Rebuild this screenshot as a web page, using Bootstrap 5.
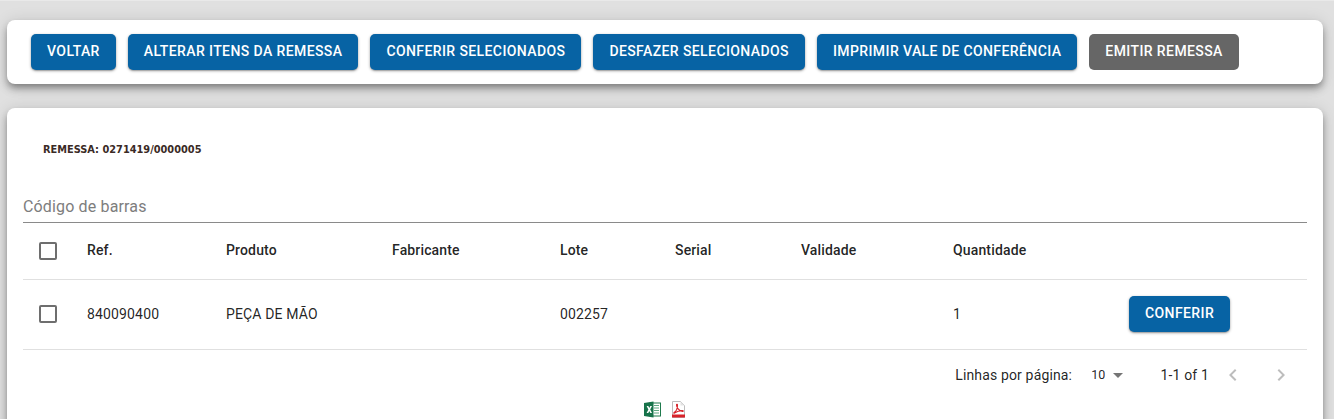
<!DOCTYPE html>
<html lang="pt-BR">
<head>
    <meta charset="UTF-8">
    <meta name="viewport" content="width=device-width, initial-scale=1">
    <title>Conferência de Remessa</title>
    <link href="https://cdn.jsdelivr.net/npm/bootstrap@5.3.0/dist/css/bootstrap.min.css" rel="stylesheet">
    <style>
        html, body { height: 100%; overflow: hidden; }
        body {
            background: #e0e0e0;
            font-family: Roboto, sans-serif;
            font-size: 14px;
            color: rgba(0, 0, 0, .87);
        }
        .pagina { padding: 19px 11px 0 7px; border-top: 1px solid #e9e9e9; }
        .painel {
            border: 0;
            border-radius: 8px;
            box-shadow: 0 4px 6px -1px rgba(0,0,0,.3), 0 6px 10px 0 rgba(0,0,0,.14), 0 1px 16px 0 rgba(0,0,0,.12);
        }
        .painel-acoes { margin-bottom: 24px; padding: 14px 24px; gap: 12px; }
        .painel-dados { padding: 0 16px; height: 400px; }
        .btn-acao {
            --bs-btn-color: #fff;
            --bs-btn-bg: #0763a4;
            --bs-btn-border-color: #0763a4;
            --bs-btn-hover-color: #fff;
            --bs-btn-hover-bg: #06568f;
            --bs-btn-hover-border-color: #06568f;
            border: 0;
            border-radius: 5px;
            padding: 5px 16px 7px;
            height: 36px;
            font-size: 14px;
            font-weight: 500;
            line-height: 24px;
            letter-spacing: .4px;
            text-transform: uppercase;
            white-space: nowrap;
            box-shadow: 0 1px 3px rgba(0,0,0,.35), 0 1px 1px rgba(0,0,0,.14);
        }
        .btn-acao-cinza {
            --bs-btn-bg: #666;
            --bs-btn-border-color: #666;
            --bs-btn-hover-bg: #666;
            --bs-btn-hover-border-color: #666;
            box-shadow: none;
        }
        .remessa-titulo {
            margin: 0;
            padding: 36px 0 0 20px;
            height: 76px;
            font-family: "DejaVu Sans", sans-serif;
            font-size: 9.8px;
            font-weight: 700;
            line-height: 12px;
            color: #3a2a25;
        }
        .campo-barras {
            display: block;
            width: 100%;
            height: 39px;
            padding: 6px 0 0;
            border: 0;
            border-bottom: 1px solid #8a8a8a;
            border-radius: 0;
            background: transparent;
            font-size: 16px;
            letter-spacing: .15px;
            outline: 0;
        }
        .campo-barras::placeholder { color: #7d7d7d; opacity: 1; }
        .tabela-itens { table-layout: fixed; width: 100%; margin: 0; }
        .tabela-itens th, .tabela-itens td {
            padding: 0 16px;
            border-bottom: 1px solid #e0e0e0;
            vertical-align: middle;
            color: rgba(0, 0, 0, .87);
            font-size: 14px;
            letter-spacing: .15px;
        }
        .tabela-itens th { height: 56px; font-weight: 500; }
        .tabela-itens td { height: 70px; font-weight: 400; }
        .tabela-itens .cel-check { padding: 0 0 0 16px; }
        .tabela-itens .btn-acao { letter-spacing: .4px; }
        .c1 { width: 48px; } .c2 { width: 139px; } .c3 { width: 166px; }
        .c4 { width: 168px; } .c5 { width: 115px; } .c6 { width: 126px; }
        .c7 { width: 152px; } .c8 { width: 176px; }
        .caixa {
            display: block;
            width: 18px;
            height: 18px;
            margin: 0;
            border: 2px solid #6e6e6e;
            border-radius: 2px;
            background: #fff;
            appearance: none;
        }
        .rodape-tabela { height: 51px; padding-right: 14px; letter-spacing: .15px; }
        .rodape-rotulo { margin-right: 19px; }
        .rodape-linhas { font-size: 12.5px; margin-right: 7px; }
        .seta-baixo {
            width: 0; height: 0;
            border-left: 5.5px solid transparent;
            border-right: 5.5px solid transparent;
            border-top: 5px solid #757575;
            margin-right: 38px;
        }
        .rodape-contagem { margin-right: 12px; }
        .seta-pag { width: 24px; height: 24px; display: block; }
        .seta-pag + .seta-pag { margin-left: 24px; }
        .icones-exportar { gap: 10px; height: 17px; }
    </style>
</head>
<body>
    <div class="pagina">
        <!-- Barra de ações -->
        <div class="card painel painel-acoes d-flex flex-row">
            <button type="button" class="btn btn-acao">Voltar</button>
            <button type="button" class="btn btn-acao">Alterar itens da remessa</button>
            <button type="button" class="btn btn-acao">Conferir selecionados</button>
            <button type="button" class="btn btn-acao">Desfazer selecionados</button>
            <button type="button" class="btn btn-acao">Imprimir vale de conferência</button>
            <button type="button" class="btn btn-acao btn-acao-cinza">Emitir remessa</button>
        </div>

        <!-- Dados da remessa -->
        <div class="card painel painel-dados">
            <p class="remessa-titulo">REMESSA: 0271419/0000005</p>
            <input type="text" class="campo-barras" placeholder="Código de barras">

            <table class="table tabela-itens">
                <colgroup>
                    <col class="c1"><col class="c2"><col class="c3"><col class="c4">
                    <col class="c5"><col class="c6"><col class="c7"><col class="c8"><col>
                </colgroup>
                <thead>
                    <tr>
                        <th class="cel-check"><input type="checkbox" class="caixa" aria-label="Selecionar todos"></th>
                        <th>Ref.</th>
                        <th>Produto</th>
                        <th>Fabricante</th>
                        <th>Lote</th>
                        <th>Serial</th>
                        <th>Validade</th>
                        <th>Quantidade</th>
                        <th></th>
                    </tr>
                </thead>
                <tbody>
                    <tr>
                        <td class="cel-check"><input type="checkbox" class="caixa" aria-label="Selecionar"></td>
                        <td>840090400</td>
                        <td>PEÇA DE MÃO</td>
                        <td></td>
                        <td>002257</td>
                        <td></td>
                        <td></td>
                        <td>1</td>
                        <td><button type="button" class="btn btn-acao">Conferir</button></td>
                    </tr>
                </tbody>
            </table>

            <!-- Paginação -->
            <div class="rodape-tabela d-flex align-items-center justify-content-end">
                <span class="rodape-rotulo">Linhas por página:</span>
                <span class="rodape-linhas">10</span>
                <span class="seta-baixo"></span>
                <span class="rodape-contagem">1-1 of 1</span>
                <svg class="seta-pag" viewBox="0 0 24 24"><path fill="#bdbdbd" d="M15.41 7.41 14 6l-6 6 6 6 1.41-1.41L10.83 12z"/></svg>
                <svg class="seta-pag" viewBox="0 0 24 24"><path fill="#bdbdbd" d="M8.59 16.59 10 18l6-6-6-6-1.41 1.41L13.17 12z"/></svg>
            </div>

            <!-- Exportar -->
            <div class="icones-exportar d-flex justify-content-center">
                <svg width="17" height="17" viewBox="0 0 17 17">
                    <rect x="6" y="2" width="10.500" height="13" fill="#fff" stroke="#1f7a4d"/>
                    <path stroke="#5fa883" d="M10 4.500h5M10 7h5M10 9.500h5M10 12h5"/>
                    <path fill="#17734a" d="M0 2 9.500 .5v16L0 15z"/>
                    <path fill="#fff" d="M2.600 5h1.700l1 2 1-2H8L6.200 8.500 8 12H6.300L5.300 9.900 4.300 12H2.600l1.800-3.500z"/>
                </svg>
                <svg width="15" height="17" viewBox="0 0 15 17">
                    <path fill="#fff" stroke="#bdbdbd" d="M1.500.5h8l4 4v12h-12z"/>
                    <path fill="#e3e3e3" d="M9.500.5v4h4z"/>
                    <path fill="none" stroke="#d8232a" stroke-width="1.100" d="M3 11.500c2-1 3.500-4.500 3.500-7.500 0-1-1-1-1 0 0 3 3 6 6 6.500 1 .1 1-.9 0-.9-2.500 0-6 1-8 2.400-.8.6-.8-.5-.5-.5z"/>
                    <rect x="1" y="13.500" width="13" height="3" fill="#d8232a"/>
                </svg>
            </div>
        </div>
    </div>
</body>
</html>
